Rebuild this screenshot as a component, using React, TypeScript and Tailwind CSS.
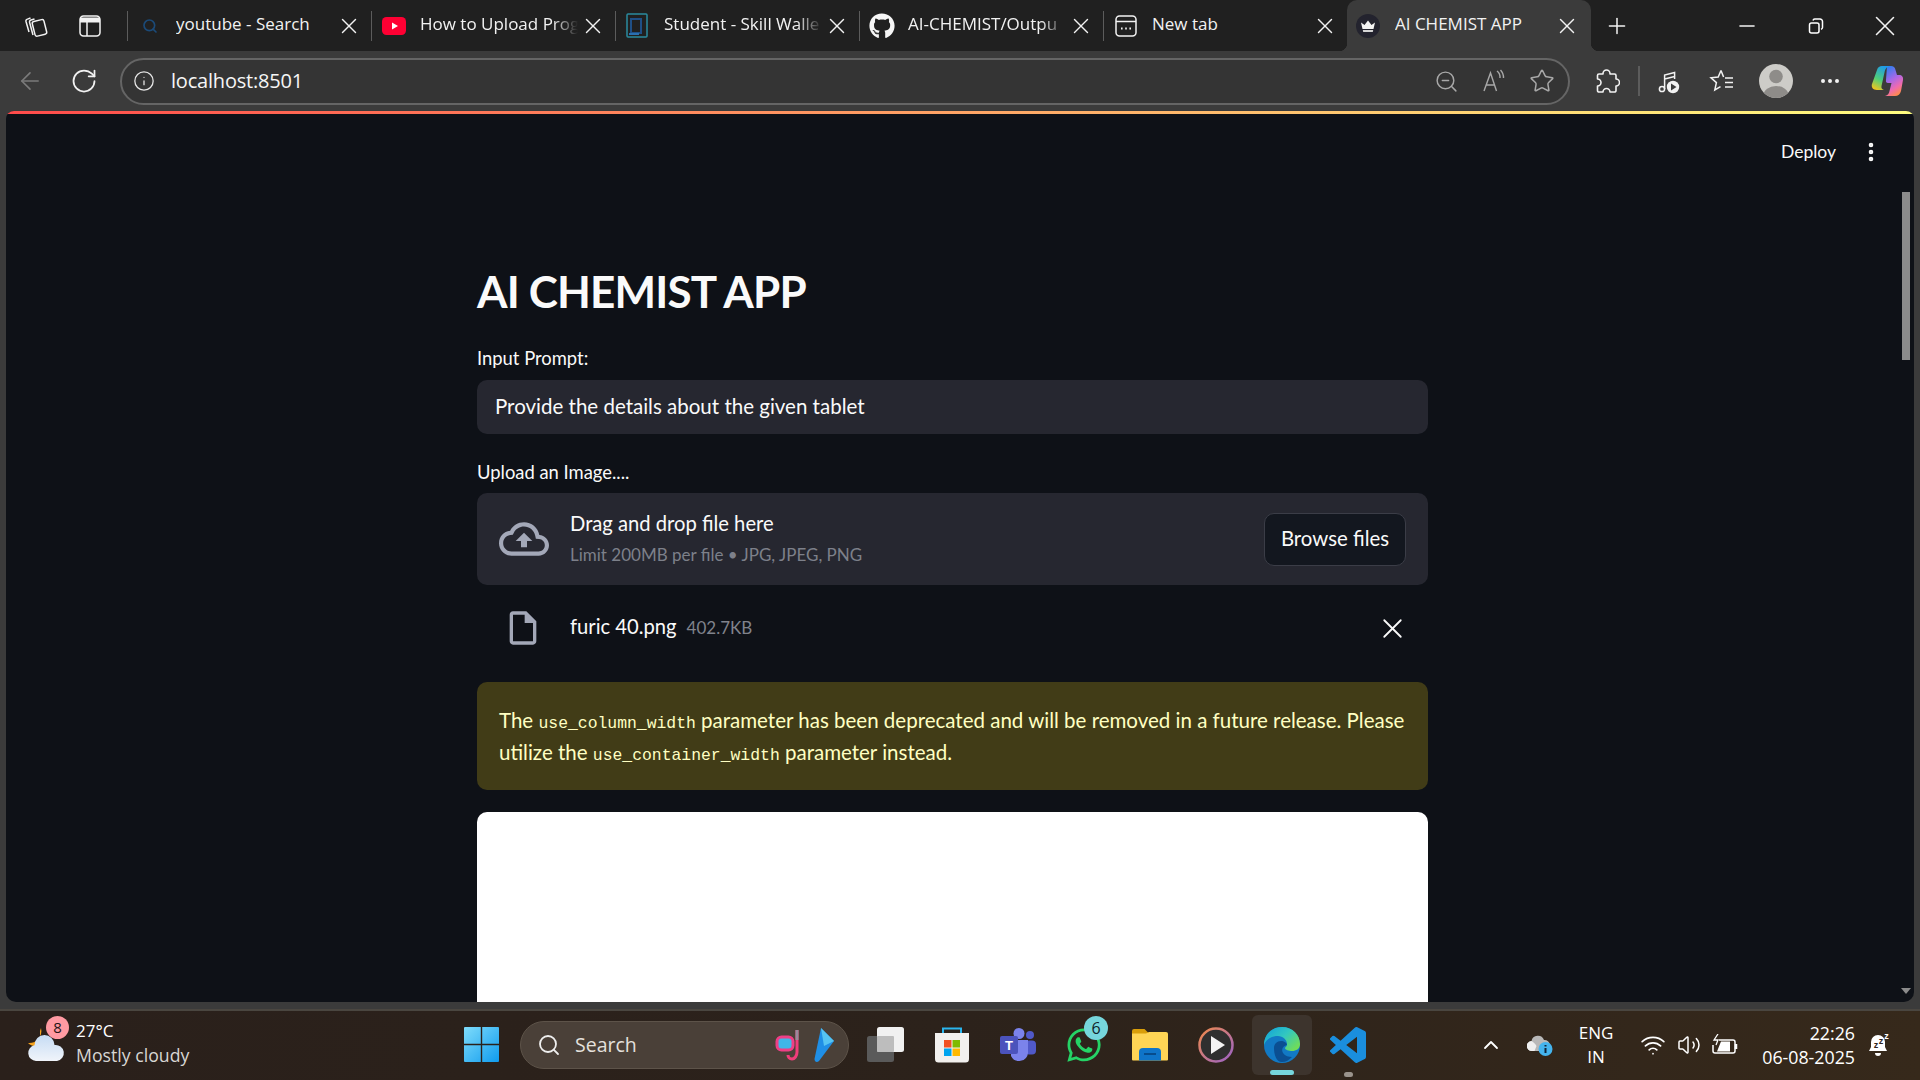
import {
  ArrowLeft,
  ChevronUp,
  EllipsisVertical,
  Info,
  Minus,
  MoreHorizontal,
  Plus,
  RotateCw,
  Search,
  Star,
  Volume2,
  Wifi,
  X,
  ZoomOut,
} from "lucide-react";
import type { ReactNode } from "react";
import { FaGithub, FaWhatsapp } from "react-icons/fa";

// --- Browser tab icons ---

const CollectionsIcon = () => (
  <svg width="26" height="26" viewBox="0 0 26 26" fill="none" stroke="#f2f2f2" strokeWidth="1.5">
    <path d="M6 19 3 8.5a2 2 0 0 1 1.4-2.4L7.5 5" />
    <path d="M10 22 6.6 9.5A2 2 0 0 1 8 7l3.5-1" />
    <rect x="10.5" y="7.5" width="12" height="15" rx="2" transform="rotate(-14 16 15)" />
  </svg>
);

const VerticalTabsIcon = () => (
  <svg width="22" height="22" viewBox="0 0 22 22" fill="none" stroke="#f2f2f2" strokeWidth="1.5">
    <rect x="1" y="1" width="20" height="20" rx="3.5" />
    <path d="M1 5h20" strokeWidth="5" />
    <path d="M8 6v15" />
  </svg>
);

const YoutubeFavicon = () => (
  <svg width="24" height="18" viewBox="0 0 24 18">
    <rect width="24" height="18" rx="4.5" fill="#ff0033" />
    <path d="m10 5.5 6 3.5-6 3.5z" fill="#fff" />
  </svg>
);

const StudentFavicon = () => (
  <svg width="24" height="26" viewBox="0 0 24 26" fill="none">
    <rect x="1" y="1" width="20" height="23" rx="1" stroke="#2a8a9e" strokeWidth="1.5" />
    <path d="M5 6h10v14H5z" stroke="#1f4f86" strokeWidth="2" />
    <path d="M3 21h10" stroke="#2a6fb0" strokeWidth="2" />
  </svg>
);

const NewTabFavicon = () => (
  <svg width="22" height="22" viewBox="0 0 22 22" fill="none" stroke="#f2f2f2" strokeWidth="1.5">
    <rect x="1" y="1" width="20" height="20" rx="3.5" />
    <path d="M1 6.5h20" />
    <path d="M6 13.5h1.6M10.2 13.5h1.6M14.4 13.5H16" strokeWidth="2" />
  </svg>
);

const CrownFavicon = () => (
  <svg width="24" height="24" viewBox="0 0 24 24">
    <circle cx="12" cy="12" r="12" fill="#23232e" />
    <path d="M5 8.5 8.5 11 12 6.5l3.5 4.5L19 8.5 17.5 15h-11z" fill="#f4f4f4" />
    <path d="M6.8 16h10.4l-.4 2H7.2z" fill="#d6d6d6" />
  </svg>
);

const RestoreIcon = () => (
  <svg width="16" height="16" viewBox="0 0 16 16" fill="none" stroke="#fff" strokeWidth="1.5">
    <rect x="1.5" y="5" width="9.5" height="10" rx="2" />
    <path d="M5 2.5A2 2 0 0 1 6.8 1H12a2.5 2.5 0 0 1 2.5 2.5v6A2 2 0 0 1 13 11.3" />
  </svg>
);

// --- Browser toolbar icons ---

const ReadAloudIcon = () => (
  <svg width="26" height="26" viewBox="0 0 26 26" fill="none" stroke="#a8a8a8" strokeWidth="1.4">
    <path d="M3 23 9.5 5l6 18M5.5 17h8" />
    <path d="M16 3a8 8 0 0 1 3 7M19.5 2a11 11 0 0 1 3 8" />
  </svg>
);

const ExtensionsIcon = () => (
  <svg width="26" height="28" viewBox="0 0 26 28" fill="none" stroke="#f2f2f2" strokeWidth="1.6" strokeLinejoin="round">
    <path d="M9 6.5a3.5 3.5 0 0 1 7 0V7h4.500A1.500 1.500 0 0 1 22 8.500V12a3.500 3.500 0 0 1 0 7v4.500a1.500 1.500 0 0 1-1.500 1.500H16a3.500 3.500 0 0 0-7 0H5a1.500 1.500 0 0 1-1.500-1.500V19a3.500 3.500 0 0 0 0-7V8.500A1.500 1.500 0 0 1 5 7h4z" />
  </svg>
);

const MediaIcon = () => (
  <svg width="26" height="26" viewBox="0 0 26 26" fill="none" stroke="#f2f2f2" strokeWidth="1.5">
    <circle cx="5" cy="21" r="2.6" />
    <path d="M7.6 21V7l10-2.5V11M7.6 11l10-2.5" />
    <circle cx="16" cy="19" r="6.2" fill="#f2f2f2" stroke="none" />
    <path d="m14 15.5 5.5 3.5-5.500 3.500z" fill="#3b3b3b" stroke="none" />
  </svg>
);

const FavoritesIcon = () => (
  <svg width="26" height="26" viewBox="0 0 26 26" fill="none" stroke="#f2f2f2" strokeWidth="1.5">
    <path d="M12 2.5 9.2 9 2 9.800l5.400 4.800L5.800 22l5.700-3.300M12 2.500 14.600 9M16 10h8M16 14.500h8M16 19h8" />
  </svg>
);

const AvatarIcon = () => (
  <svg width="34" height="34" viewBox="0 0 34 34">
    <clipPath id="avatar">
      <circle cx="17" cy="17" r="17" />
    </clipPath>
    <g clipPath="url(#avatar)">
      <rect width="34" height="34" fill="#cdccc8" />
      <circle cx="17" cy="12.5" r="6.8" fill="#8e8c89" />
      <ellipse cx="17" cy="31" rx="12.5" ry="9" fill="#8e8c89" />
    </g>
  </svg>
);

const CopilotIcon = () => (
  <svg width="34" height="34" viewBox="0 0 34 34" fill="none">
    <defs>
      <linearGradient id="copA" x1="0.6" y1="0" x2="0.2" y2="1">
        <stop offset="0" stopColor="#1f9be8" />
        <stop offset="0.55" stopColor="#4fd07a" />
        <stop offset="1" stopColor="#f7c51c" />
      </linearGradient>
      <linearGradient id="copB" x1="0.2" y1="0" x2="0.6" y2="1">
        <stop offset="0" stopColor="#2b7ff0" />
        <stop offset="0.45" stopColor="#a868e8" />
        <stop offset="0.75" stopColor="#ef6ab0" />
        <stop offset="1" stopColor="#ff8a4c" />
      </linearGradient>
    </defs>
    <path d="M17 2h4c2.500 0 4 1.500 4.500 4L27 11h2c3 0 4.500 2 4 5L31 27c-.6 3-3 5-6 5H15c3-.5 4-2.500 4.500-5l2-8H18c-1.500 0-2.500-1-2-3z" fill="url(#copB)" />
    <path d="M12 2h8c-3 .5-4.500 2.500-5.200 5L11.500 22c-.6 2.400 1 3.500 2.500 4H7c-4 0-6-3-5-6L7 6c1-3 2.500-4 5-4z" fill="url(#copA)" />
  </svg>
);

// --- Taskbar icons ---

const WeatherIcon = () => (
  <svg width="40" height="38" viewBox="0 0 40 38">
    <defs>
      <linearGradient id="cloud" x1="0" y1="0" x2="0" y2="1">
        <stop offset="0" stopColor="#c6dcf4" />
        <stop offset="1" stopColor="#f0f4fa" />
      </linearGradient>
    </defs>
    <path d="M14 2a10 10 0 0 0 3 13 10 10 0 0 1-16 2 12 12 0 0 0 13-15z" fill="#f5a31f" />
    <path d="M9 35a8 8 0 0 1-1.500-15.800 10 10 0 0 1 20-.2A8 8 0 0 1 30 35z" fill="url(#cloud)" />
  </svg>
);

const WindowsLogo = () => (
  <svg width="35" height="35" viewBox="0 0 35 35">
    <defs>
      <linearGradient id="win" x1="0" y1="0" x2="1" y2="1">
        <stop offset="0" stopColor="#7fdcfb" />
        <stop offset="1" stopColor="#0f9bee" />
      </linearGradient>
    </defs>
    <path d="M1 0h15.800v16.800H0V1a1 1 0 0 1 1-1zM18.200 0H34a1 1 0 0 1 1 1v15.800H18.200zM0 18.200h16.800V35H1a1 1 0 0 1-1-1zM18.200 18.200H35V34a1 1 0 0 1-1 1H18.200z" fill="url(#win)" />
  </svg>
);

const SnorkelIcon = () => (
  <svg width="32" height="34" viewBox="0 0 32 34" fill="none">
    <path d="M22 2v22c0 4-2.500 7-5 7s-4-2-4-4" stroke="#ef3d7a" strokeWidth="3" />
    <path d="M22 2v10" stroke="#9a8a9c" strokeWidth="3" />
    <rect x="2" y="9" width="16" height="13" rx="4.5" fill="#3fb6e8" stroke="#ee3f86" strokeWidth="3" />
  </svg>
);

const FlipperIcon = () => (
  <svg width="28" height="36" viewBox="0 0 28 36">
    <path d="M12 1 25 14 10 34c-2 2-4.500 1-4.500-2z" fill="#1f8fe6" />
    <path d="M12 1 25 14 15 19z" fill="#56c4f2" />
  </svg>
);

const TaskViewIcon = () => (
  <svg width="38" height="36" viewBox="0 0 38 36">
    <rect x="0" y="9" width="27" height="26" rx="2.5" fill="#5a5a5a" />
    <rect x="10" y="0" width="27" height="25" rx="2.5" fill="#f1f1f1" />
    <rect x="10" y="9" width="17" height="16" rx="1" fill="#bdbdbd" />
  </svg>
);

const StoreIcon = () => (
  <svg width="36" height="36" viewBox="0 0 36 36" fill="none">
    <path d="M9 6V1.5h18V6" stroke="#2ab5ee" strokeWidth="2" />
    <path d="M1 6h34v26a3.500 3.500 0 0 1-3.500 3.500h-27A3.500 3.500 0 0 1 1 32z" fill="#f2f0ee" />
    <rect x="10" y="13" width="7.5" height="7.5" fill="#f25022" />
    <rect x="18.5" y="13" width="7.5" height="7.5" fill="#7fba00" />
    <rect x="10" y="21.5" width="7.5" height="7.5" fill="#00a4ef" />
    <rect x="18.5" y="21.5" width="7.5" height="7.5" fill="#ffb900" />
  </svg>
);

const TeamsIcon = () => (
  <svg width="36" height="34" viewBox="0 0 36 34">
    <circle cx="30" cy="7" r="4" fill="#5059c9" />
    <rect x="25" y="12.5" width="11" height="14" rx="4" fill="#5059c9" />
    <circle cx="19" cy="5.5" r="5.5" fill="#7b83eb" />
    <path d="M11 12h17v13a9 9 0 0 1-17 3z" fill="#7b83eb" />
    <rect x="0" y="8" width="18" height="18" rx="2" fill="#4b53bc" />
    <text x="9" y="22" textAnchor="middle" fontSize="13" fontWeight="700" fill="#fff" fontFamily="Liberation Sans, sans-serif">
      T
    </text>
  </svg>
);

const FolderIcon = () => (
  <svg width="36" height="34" viewBox="0 0 36 34">
    <path d="M0 3a2 2 0 0 1 2-2h10.500l4 4H34a2 2 0 0 1 2 2v4H0z" fill="#d99e0a" />
    <path d="M0 5.500h14l3-1.500h17a2 2 0 0 1 2 2v25.500a1 1 0 0 1-1 1H1a1 1 0 0 1-1-1z" fill="#ffd555" />
    <path d="M7 32.500V24a4 4 0 0 1 4-4h14a4 4 0 0 1 4 4v8.500z" fill="#0f74c8" />
    <path d="M12 26h12" stroke="#063f78" strokeWidth="1.5" />
  </svg>
);

const PlayerIcon = () => (
  <svg width="36" height="36" viewBox="0 0 36 36" fill="none">
    <defs>
      <linearGradient id="ring" x1="0" y1="0" x2="1" y2="1">
        <stop offset="0" stopColor="#f08a4b" />
        <stop offset="1" stopColor="#9a62c8" />
      </linearGradient>
    </defs>
    <circle cx="18" cy="18" r="16.5" fill="#2f2f2f" stroke="url(#ring)" strokeWidth="2.5" />
    <path d="m13 9 14 9-14 9z" fill="#f3f3f3" />
  </svg>
);

const EdgeIcon = () => (
  <svg width="36" height="36" viewBox="0 0 36 36">
    <defs>
      <linearGradient id="edgeA" x1="0" y1="0" x2="1" y2="0.7">
        <stop offset="0" stopColor="#0f9fdc" />
        <stop offset="0.55" stopColor="#32c7c0" />
        <stop offset="1" stopColor="#6fdc5a" />
      </linearGradient>
    </defs>
    <circle cx="18" cy="18" r="18" fill="#1279c4" />
    <path d="M0 18C0 7 8 0 18 0c11 0 18 8 18 17 0 5-4 7-8 7-3 0-7-1-7-3 0-1 2-1 2-4 0-4-4-8-9-8C8 9 2 12 0 18z" fill="url(#edgeA)" />
    <path d="M10 21c0-4 3-7 7-7 3 0 6 2 6 4-4 1-6 4-4 8 2 3 6 4 9 4-3 3-6 5-10 5C12 35 10 27 10 21z" fill="#0b4f92" />
  </svg>
);

const VsCodeIcon = () => (
  <svg width="36" height="36" viewBox="0 0 24 24" fill="#1a8ede">
    <path d="M23.15 2.587L18.21.21a1.494 1.494 0 0 0-1.705.29l-9.46 8.63-4.12-3.128a.999.999 0 0 0-1.276.057L.327 7.261A1 1 0 0 0 .326 8.74L3.899 12 .326 15.26a1 1 0 0 0 .001 1.479L1.65 17.94a.999.999 0 0 0 1.276.057l4.12-3.128 9.46 8.63a1.492 1.492 0 0 0 1.704.29l4.942-2.377A1.5 1.5 0 0 0 24 20.06V3.939a1.5 1.5 0 0 0-.85-1.352zm-5.146 14.861L10.826 12l7.178-5.448v10.896z" />
  </svg>
);

const CloudInfoIcon = () => (
  <svg width="26" height="22" viewBox="0 0 26 22">
    <path d="M5 17a5 5 0 0 1-.5-10A6.500 6.500 0 0 1 17 6a5.500 5.500 0 0 1 1 11z" fill="#b8b8b8" />
    <path d="M5 17a5 5 0 0 1-.5-10c2 1 4 3 5 5l-2 5z" fill="#efefef" />
    <circle cx="18.5" cy="15" r="7" fill="#44b4ee" />
    <path d="M18.5 11v1.500M18.500 14v5" stroke="#10243a" strokeWidth="2" />
  </svg>
);

const BatteryIcon = () => (
  <svg width="26" height="22" viewBox="0 0 26 22" fill="none" stroke="#fff" strokeWidth="1.5">
    <path d="M7 6h14a2 2 0 0 1 2 2v9a2 2 0 0 1-2 2H3a2 2 0 0 1-2-2v-6" />
    <path d="M5 17.500h13V7.500H9z" fill="#fff" stroke="none" />
    <path d="M24 10v5" strokeWidth="2.5" />
    <path d="M6 0 2 6h4l-2 5" strokeWidth="1.3" />
  </svg>
);

const BellIcon = () => (
  <svg width="22" height="26" viewBox="0 0 22 26">
    <path d="M10 3a7 7 0 0 0-7 7v5l-2 4h18l-2-4v-5a7 7 0 0 0-7-7z" fill="#fff" />
    <path d="M7 21h6a3 3 0 0 1-6 0z" fill="#fff" />
    <text x="8" y="16" fontSize="9" fontWeight="700" fill="#2e231b" textAnchor="middle" fontFamily="Liberation Sans, sans-serif">
      z
    </text>
    <text x="13" y="12" fontSize="9" fontWeight="700" fill="#2e231b" textAnchor="middle" fontFamily="Liberation Sans, sans-serif">
      z
    </text>
    <text x="18.5" y="7" fontSize="9" fontWeight="700" fill="#fff" textAnchor="middle" fontFamily="Liberation Sans, sans-serif">
      z
    </text>
  </svg>
);

// --- Streamlit icons ---

const CloudUploadIcon = () => (
  <svg width="50" height="50" viewBox="0 0 24 24" fill="#a3a8b8">
    <path d="M19.35 10.04C18.67 6.59 15.64 4 12 4 9.110 4 6.600 5.640 5.350 8.040 2.340 8.360 0 10.910 0 14c0 3.310 2.690 6 6 6h13c2.760 0 5-2.240 5-5 0-2.640-2.050-4.780-4.650-4.960zM19 18H6c-2.210 0-4-1.790-4-4 0-2.050 1.530-3.760 3.560-3.970l1.070-.11.5-.95C8.080 7.140 9.940 6 12 6c2.620 0 4.880 1.860 5.390 4.430l.3 1.500 1.530.11c1.560.1 2.780 1.410 2.780 2.960 0 1.650-1.350 3-3 3zM8 13h2.550v3h2.900v-3H16l-4-4z" />
  </svg>
);

const FileIcon = () => (
  <svg width="40" height="40" viewBox="0 0 24 24" fill="#a3a8b8">
    <path d="M14 2H6c-1.100 0-1.990.9-1.990 2L4 20c0 1.100.89 2 1.990 2H18c1.100 0 2-.9 2-2V8l-6-6zM6 20V4h7v5h5v11H6z" />
  </svg>
);

// --- Tab strip ---

interface TabProps {
  icon: ReactNode;
  title: string;
  fade?: boolean;
}

const Tab = ({ icon, title, fade = false }: TabProps) => (
  <div className="relative flex h-full w-[244px] items-center">
    <div className="absolute left-0 top-[11px] h-[30px] w-px bg-[#5c5c5c]" />
    <div className="flex w-[49px] justify-center pr-[4px]">{icon}</div>
    <div
      className={
        fade
          ? "w-[158px] overflow-hidden pb-[3px] whitespace-nowrap text-[17px] text-[#f2f2f2] [mask-image:linear-gradient(to_right,black_84%,transparent)]"
          : "w-[158px] overflow-hidden pb-[3px] whitespace-nowrap text-[17px] text-[#f2f2f2]"
      }
    >
      {title}
    </div>
    <X className="ml-[2px] size-[26px] text-[#f2f2f2]" strokeWidth={1.3} />
  </div>
);

const ActiveTab = () => (
  <div className="relative flex h-full w-[244px] items-center rounded-t-[10px] bg-[#3b3b3b]">
    <div className="absolute -left-2 bottom-0 size-2 bg-[radial-gradient(circle_at_0_0,transparent_8px,#3b3b3b_8.5px)]" />
    <div className="absolute -right-2 bottom-0 size-2 bg-[radial-gradient(circle_at_100%_0,transparent_8px,#3b3b3b_8.5px)]" />
    <div className="flex w-[48px] justify-center pr-[6px]">
      <CrownFavicon />
    </div>
    <div className="w-[158px] overflow-hidden pb-[3px] whitespace-nowrap text-[17px] text-[#f2f2f2]">AI CHEMIST APP</div>
    <X className="ml-[1px] size-[26px] text-[#f2f2f2]" strokeWidth={1.3} />
  </div>
);

const TabStrip = () => (
  <div className="flex h-[51px] items-center bg-[#202020]">
    <div className="flex h-full w-[127px] items-center">
      <div className="ml-[23px]">
        <CollectionsIcon />
      </div>
      <div className="ml-[30px]">
        <VerticalTabsIcon />
      </div>
    </div>
    <Tab icon={<Search className="size-[16px] text-[#1b4a78]" strokeWidth={2.5} />} title="youtube - Search" />
    <Tab icon={<YoutubeFavicon />} title="How to Upload Prog" fade />
    <Tab icon={<StudentFavicon />} title="Student - Skill Walle" fade />
    <Tab icon={<FaGithub className="size-[26px] text-[#f6f6f6]" />} title="AI-CHEMIST/Outpu" fade />
    <Tab icon={<NewTabFavicon />} title="New tab" />
    <ActiveTab />
    <Plus className="ml-[13px] size-[26px] text-[#f2f2f2]" strokeWidth={1.4} />
    <Minus className="ml-[105px] size-[24px] text-[#f2f2f2]" strokeWidth={1.6} />
    <div className="ml-[49px]">
      <RestoreIcon />
    </div>
    <X className="ml-[44px] size-[34px] text-[#f2f2f2]" strokeWidth={1.1} />
  </div>
);

// --- Address bar ---

const AddressBar = () => (
  <div className="flex h-[60px] items-center bg-[#3b3b3b]">
    <ArrowLeft className="ml-[16px] size-[28px] text-[#7b7b7b]" strokeWidth={1.4} />
    <RotateCw className="ml-[26px] size-[28px] text-[#f2f2f2]" strokeWidth={1.5} />
    <div className="ml-[22px] flex h-[47px] w-[1450px] items-center rounded-[24px] border-2 border-[#656565] bg-[#343434]">
      <Info className="ml-[11px] size-[22px] text-[#e6e6e6]" strokeWidth={1.4} />
      <span className="ml-[16px] text-[20px] tracking-[-0.2px] text-[#f6f6f6]">localhost:8501</span>
      <div className="ml-auto flex items-center gap-[22px] pr-[13px]">
        <ZoomOut className="size-[25px] text-[#a8a8a8]" strokeWidth={1.4} />
        <ReadAloudIcon />
        <Star className="size-[26px] text-[#a8a8a8]" strokeWidth={1.4} />
      </div>
    </div>
    <div className="ml-[24px]">
      <ExtensionsIcon />
    </div>
    <div className="ml-[18px] h-[30px] w-[2px] bg-[#5c5c5c]" />
    <div className="ml-[17px]">
      <MediaIcon />
    </div>
    <div className="ml-[26px]">
      <FavoritesIcon />
    </div>
    <div className="ml-[24px]">
      <AvatarIcon />
    </div>
    <MoreHorizontal className="ml-[25px] size-[24px] text-[#f2f2f2]" strokeWidth={2} />
    <div className="ml-[28px]">
      <CopilotIcon />
    </div>
  </div>
);

// --- Streamlit page ---

const Code = ({ children }: { children: string }) => (
  <code className="font-['Liberation_Mono',monospace] text-[16.4px] leading-none">{children}</code>
);

const StreamlitPage = () => (
  <div className="relative flex-1 overflow-hidden rounded-t-[8px] rounded-b-[10px] bg-[#0e1117] font-['Lato',sans-serif]">
    <div className="h-[3px] bg-[linear-gradient(to_right,#ff4b4b,#fffd80)]" />
    <div className="flex h-[76px] items-center">
      <span className="ml-[1775px] text-[17.5px] text-[#fafafa]">Deploy</span>
      <EllipsisVertical className="ml-[23px] size-[24px] text-[#fafafa]" strokeWidth={2.6} />
    </div>
    <div className="ml-[471px] w-[951px]">
      <h1 className="mt-[71px] h-[60px] text-[44px] leading-[60px] font-bold tracking-[-0.85px] whitespace-nowrap text-[#fafafa]">
        AI CHEMIST APP
      </h1>
      <div className="mt-[25px] h-[24px] text-[18.4px] leading-[24px] text-[#fafafa]">Input Prompt:</div>
      <div className="mt-[10px] flex h-[54px] items-center rounded-[10px] bg-[#262730] pb-[2px] pl-[18px] text-[20.5px] text-[#fafafa]">
        Provide the details about the given tablet
      </div>
      <div className="mt-[26px] h-[24px] text-[18.4px] leading-[24px] text-[#fafafa]">Upload an Image....</div>
      <div className="mt-[9px] flex h-[92px] items-center rounded-[10px] bg-[#262730]">
        <div className="ml-[22px]">
          <CloudUploadIcon />
        </div>
        <div className="ml-[21px] pb-[2px]">
          <div className="text-[20.2px] leading-[28px] text-[#fafafa]">Drag and drop file here</div>
          <div className="mt-[6px] text-[17px] leading-[24px] text-[#7d808a]">Limit 200MB per file • JPG, JPEG, PNG</div>
        </div>
        <button className="mr-[22px] ml-auto h-[53px] w-[142px] rounded-[10px] border border-[#3b3d47] bg-[#13171f] pb-[2px] text-[20.4px] text-[#fafafa]">
          Browse files
        </button>
      </div>
      <div className="mt-[21px] flex h-[44px] items-center">
        <div className="ml-[26px]">
          <FileIcon />
        </div>
        <span className="mb-[4px] ml-[27px] text-[20.2px] text-[#fafafa]">furic 40.png</span>
        <span className="ml-[10px] text-[17px] text-[#80838c]">402.7KB</span>
        <X className="mr-[19px] ml-auto size-[33px] text-[#fafafa]" strokeWidth={1.3} />
      </div>
      <div className="mt-[32px] h-[108px] rounded-[10px] bg-[#413c17] py-[22px] pl-[22px] text-[20.5px] leading-[32px] whitespace-nowrap text-[#ffffc2]">
        <p>
          The <Code>use_column_width</Code> parameter has been deprecated and will be removed in a future release. Please
        </p>
        <p>
          utilize the <Code>use_container_width</Code> parameter instead.
        </p>
      </div>
      <div className="mt-[22px] h-[300px] rounded-t-[10px] bg-white" />
    </div>
    <div className="absolute top-[81px] right-[4px] h-[168px] w-[8px] bg-[#8b8b8b]" />
    <div className="absolute right-[3px] bottom-[8px] size-0 border-x-[5px] border-t-[6px] border-x-transparent border-t-[#8b8b8b]" />
  </div>
);

// --- Taskbar ---

const TaskbarIcon = ({ children }: { children: ReactNode }) => (
  <div className="flex w-[66px] justify-center">{children}</div>
);

const Taskbar = () => (
  <div className="flex h-[71px] items-center border-t-2 border-[#4a4640] bg-[linear-gradient(to_right,#2a201b,#2c221b_50%,#36291b)] pb-[2px] text-white">
    <div className="relative ml-[27px] w-[49px]">
      <WeatherIcon />
      <div className="absolute top-[-10px] left-[19px] flex size-[23px] items-center justify-center rounded-full bg-[#ff9aa2] text-[15px] text-[#241515]">
        8
      </div>
    </div>
    <div className="w-[388px] pb-[3px] leading-[24px]">
      <div className="text-[17px]">27°C</div>
      <div className="text-[17.7px] text-[#d8d6d3]">Mostly cloudy</div>
    </div>
    <WindowsLogo />
    <div className="ml-[21px] flex h-[48px] w-[329px] items-center rounded-[24px] border border-[#5d5349] bg-[#4a4038]">
      <Search className="ml-[16px] size-[24px] text-[#efefef]" strokeWidth={1.8} />
      <span className="ml-[14px] text-[19.5px] text-[#e4e1dd]">Search</span>
      <div className="ml-auto flex items-center gap-[2px] pr-[11px]">
        <SnorkelIcon />
        <FlipperIcon />
      </div>
    </div>
    <div className="ml-[4px] flex items-center">
      <TaskbarIcon>
        <TaskViewIcon />
      </TaskbarIcon>
      <TaskbarIcon>
        <StoreIcon />
      </TaskbarIcon>
      <TaskbarIcon>
        <TeamsIcon />
      </TaskbarIcon>
      <TaskbarIcon>
        <div className="relative">
          <FaWhatsapp className="size-[38px] text-[#25d366]" />
          <div className="absolute top-[-10px] left-[19px] flex size-[24px] items-center justify-center rounded-full bg-[#76d6dc] text-[16px] text-[#10242a]">
            6
          </div>
        </div>
      </TaskbarIcon>
      <TaskbarIcon>
        <FolderIcon />
      </TaskbarIcon>
      <TaskbarIcon>
        <PlayerIcon />
      </TaskbarIcon>
      <div className="relative mx-[3px] flex h-[60px] w-[60px] items-center justify-center rounded-[6px] bg-[#3d342d]">
        <EdgeIcon />
        <div className="absolute bottom-0 h-[5px] w-[24px] rounded-full bg-[#76d6dc]" />
      </div>
      <div className="relative flex w-[66px] justify-center">
        <VsCodeIcon />
        <div className="absolute bottom-[-14px] h-[5px] w-[9px] rounded-full bg-[#9a938c]" />
      </div>
    </div>
    <ChevronUp className="ml-[98px] size-[24px] text-white" strokeWidth={1.8} />
    <div className="ml-[24px]">
      <CloudInfoIcon />
    </div>
    <div className="ml-[23px] w-[40px] text-center text-[17px] leading-[24px]">
      <div>ENG</div>
      <div>IN</div>
    </div>
    <Wifi className="ml-[24px] size-[26px]" strokeWidth={1.6} />
    <Volume2 className="ml-[11px] size-[24px]" strokeWidth={1.5} />
    <div className="ml-[11px]">
      <BatteryIcon />
    </div>
    <div className="ml-[15px] w-[102px] text-right text-[17.8px] leading-[24px]">
      <div>22:26</div>
      <div>06-08-2025</div>
    </div>
    <div className="ml-[13px]">
      <BellIcon />
    </div>
  </div>
);

export default function App() {
  return (
    <div className="flex h-[1080px] w-[1920px] flex-col overflow-hidden bg-[#3b3b3b] font-['Open_Sans',sans-serif]">
      <TabStrip />
      <AddressBar />
      <div className="flex min-h-0 flex-1 px-[6px] pb-[7px]">
        <StreamlitPage />
      </div>
      <Taskbar />
    </div>
  );
}
